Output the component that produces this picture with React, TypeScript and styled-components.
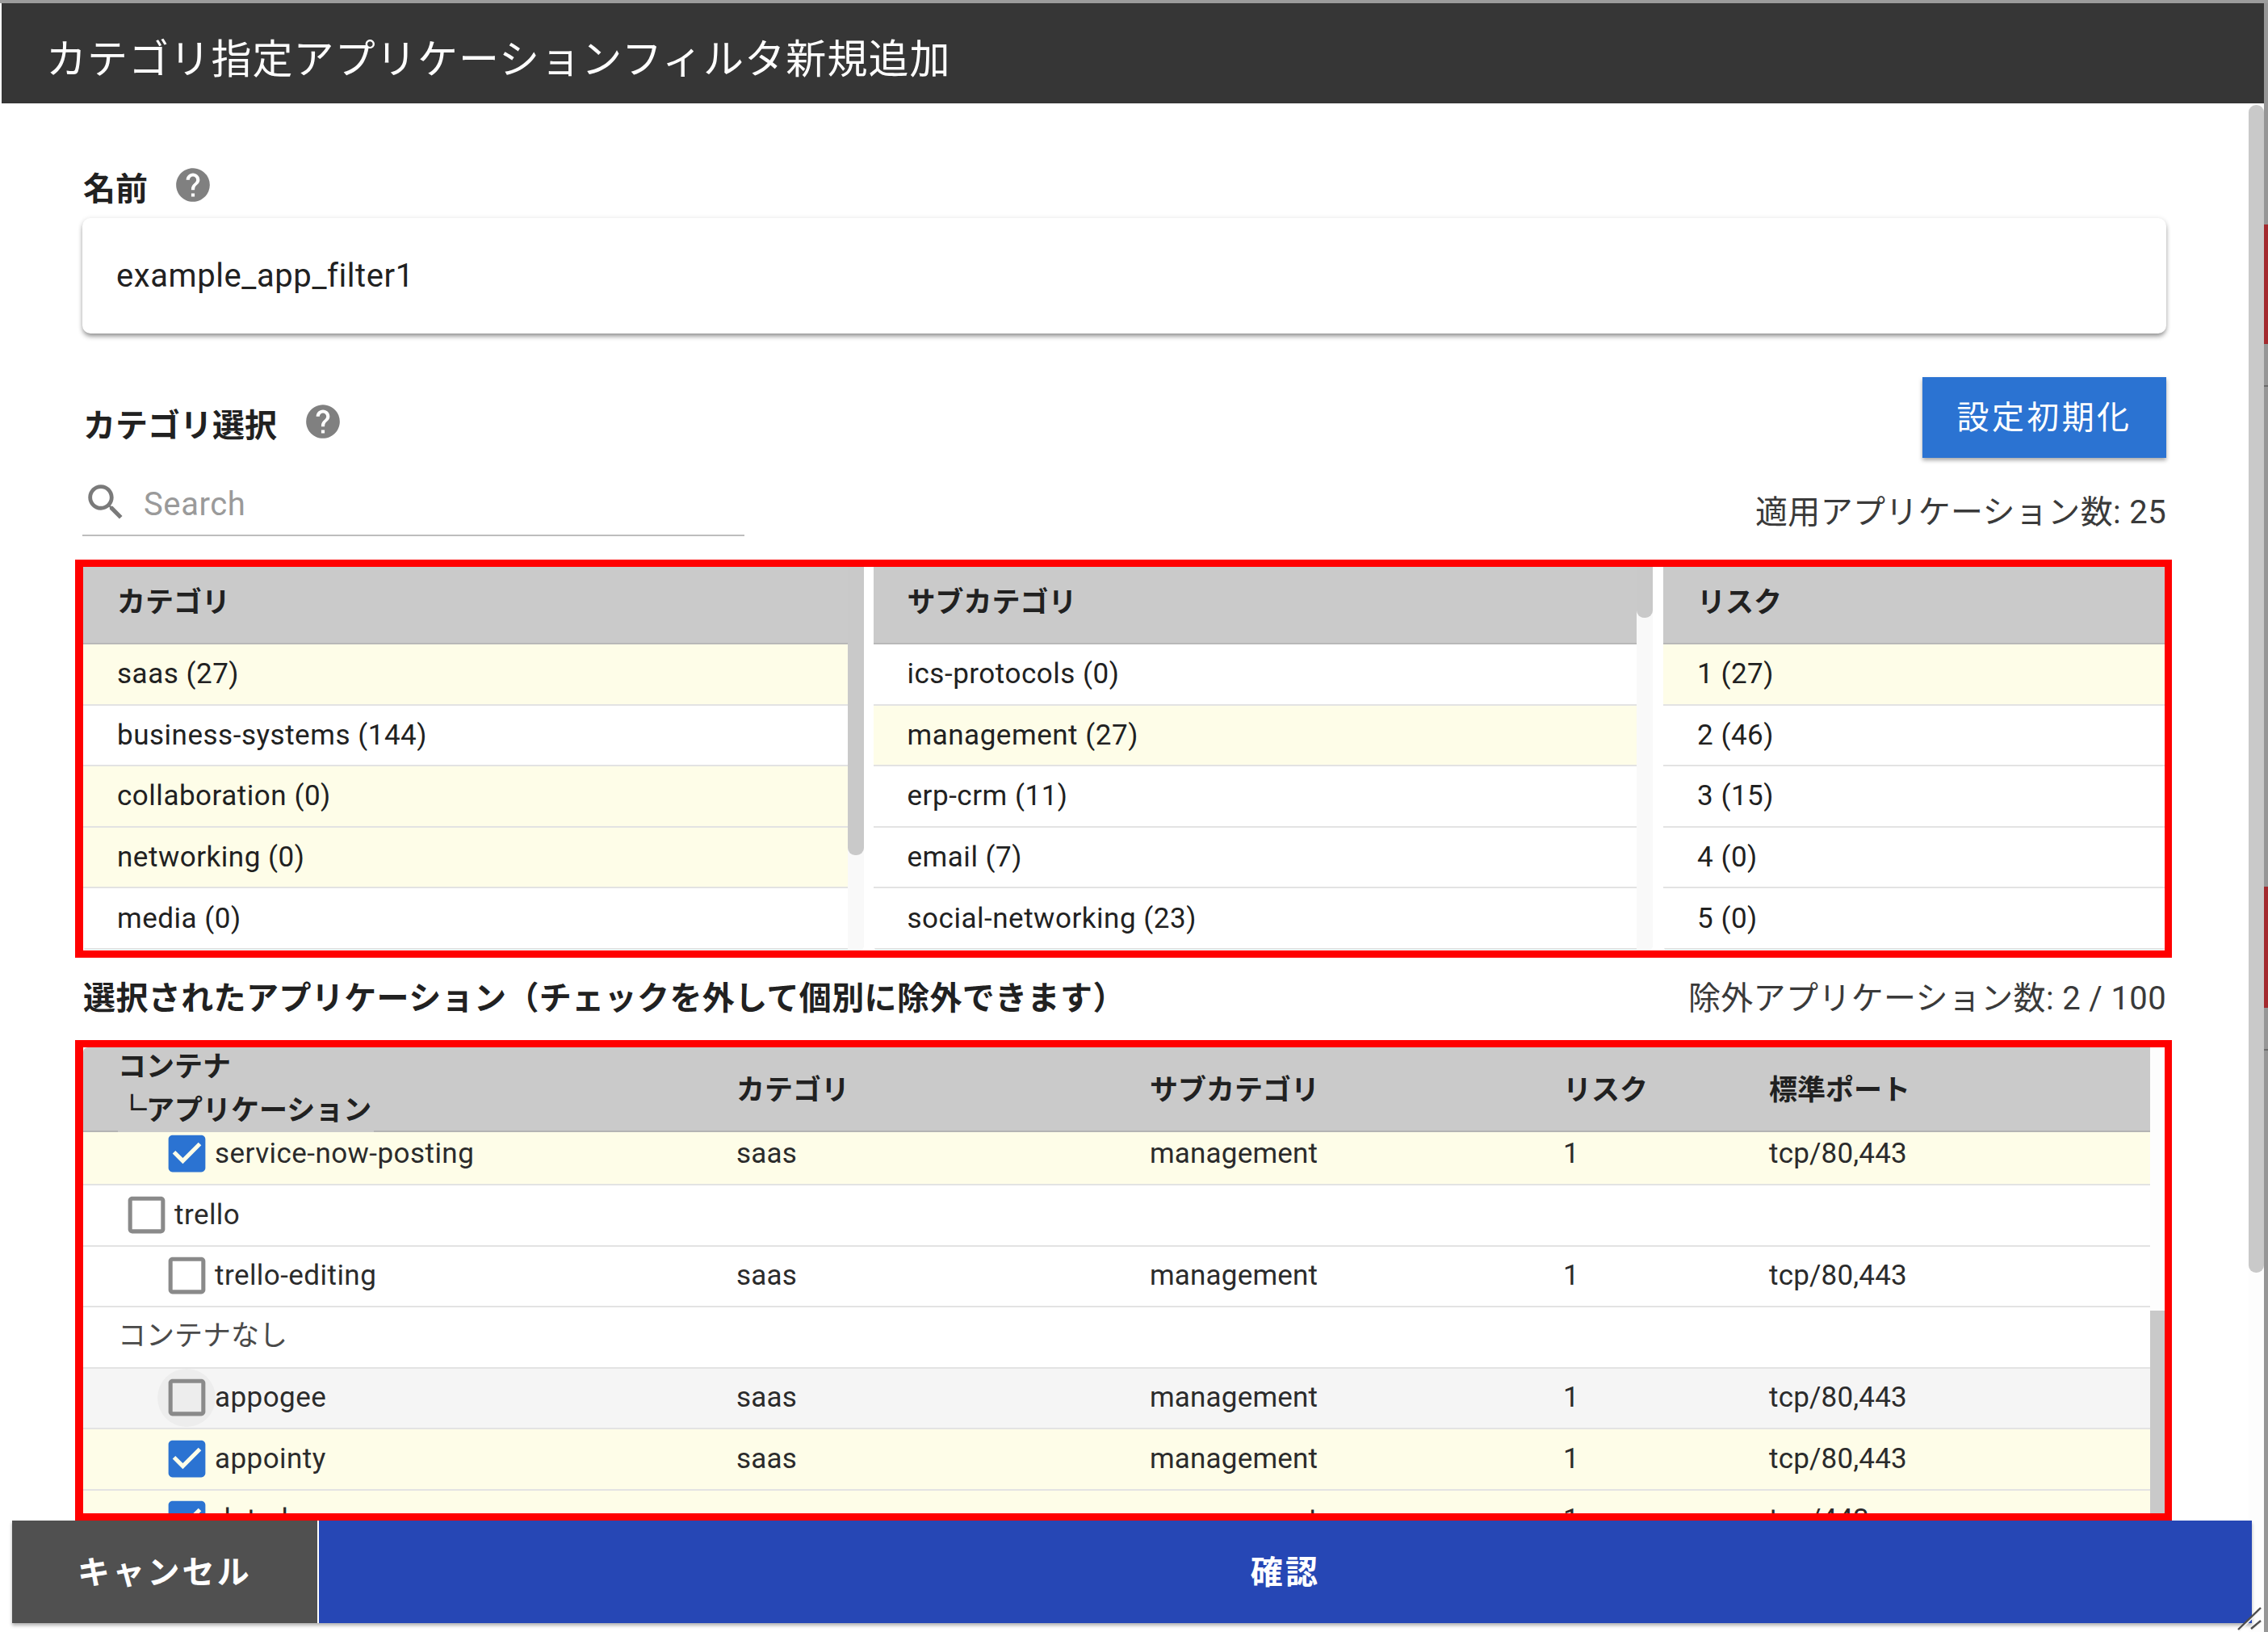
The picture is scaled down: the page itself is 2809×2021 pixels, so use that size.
import React from 'react';
import styled, { createGlobalStyle } from 'styled-components';

const GlobalStyle = createGlobalStyle`
  html, body {
    margin: 0;
    width: 2809px;
    height: 2021px;
    overflow: hidden;
    background: #fff;
    color: #212121;
    font-family: Roboto, "Noto Sans CJK JP", sans-serif;
  }
  * { box-sizing: border-box; }
`;

const HELP_PATH =
  'M12 2C6.48 2 2 6.48 2 12s4.48 10 10 10 10-4.48 10-10S17.52 2 12 2zm1 17h-2v-2h2v2zm2.07-7.75l-.9.92C13.45 12.9 13 13.5 13 15h-2v-.5c0-1.1.45-2.1 1.17-2.83l1.24-1.26c.37-.36.59-.86.59-1.41 0-1.1-.9-2-2-2s-2 .9-2 2H8c0-2.21 1.79-4 4-4s4 1.79 4 4c0 .88-.36 1.68-.93 2.25z';
const SEARCH_PATH =
  'M15.5 14h-.79l-.28-.27C15.41 12.59 16 11.11 16 9.5 16 5.91 13.09 3 9.5 3S3 5.91 3 9.5 5.91 16 9.5 16c1.61 0 3.09-.59 4.23-1.57l.27.28v.79l5 4.99L20.49 19l-4.99-5zm-6 0C7.01 14 5 11.99 5 9.5S7.01 5 9.5 5 14 7.01 14 9.5 11.99 14 9.5 14z';
const CHECKED_PATH =
  'M19 3H5c-1.11 0-2 .9-2 2v14c0 1.1.89 2 2 2h14c1.11 0 2-.9 2-2V5c0-1.1-.89-2-2-2zm-9 14l-5-5 1.41-1.41L10 14.17l7.59-7.59L19 8l-9 9z';
const UNCHECKED_PATH =
  'M19 5v14H5V5h14m0-2H5c-1.1 0-2 .9-2 2v14c0 1.1.9 2 2 2h14c1.1 0 2-.9 2-2V5c0-1.1-.9-2-2-2z';

const Window = styled.div`
  display: flex;
  width: 2809px;
  height: 2021px;
  border-top: 4px solid #9c9c9c;
  overflow: hidden;
`;

const Dialog = styled.div`
  flex: 1;
  min-width: 0;
  display: flex;
  flex-direction: column;
  padding-left: 2px;
`;

/* edge of the window behind the dialog, with the red bits showing through */
const EdgeStrip = styled.div`
  width: 5px;
  margin-top: -4px;
  background: linear-gradient(
    to bottom,
    #969696 0 278px,
    #a32a2e 278px 426px,
    #969696 426px 477px,
    #6c6c6c 477px 479px,
    #969696 479px 1098px,
    #a32a2e 1098px 1248px,
    #969696 1248px 1299px,
    #6c6c6c 1299px 1301px,
    #969696 1301px
  );
`;

const TitleBar = styled.header`
  height: 124px;
  flex: none;
  display: flex;
  align-items: center;
  padding: 5px 0 0 55px;
  background: #363636;
  color: #fff;
  font-size: 50px;
  letter-spacing: 1.1px;
`;

const Main = styled.div`
  flex: 1;
  min-height: 0;
  display: flex;
`;

const Column = styled.div`
  width: 2787px;
  flex: none;
  display: flex;
  flex-direction: column;
`;

const Content = styled.div`
  flex: 1;
  min-height: 0;
  overflow: hidden;
  padding: 76px 106px 0 100px;
`;

const PageScroll = styled.div`
  width: 19px;
  flex: none;
  margin-left: -4px;
  margin-top: 2px;
  background: #fdfdfd;
  position: relative;
`;

const PageThumb = styled.div`
  height: 1446px;
  background: #c9c9c9;
  border-radius: 9px;
`;

const ResizeGrip = styled.svg`
  position: absolute;
  right: -1px;
  bottom: 0;
  width: 34px;
  height: 32px;
  z-index: 2;
`;

const LabelRow = styled.div<{ $gap: number }>`
  display: flex;
  align-items: center;
  gap: ${(p) => p.$gap}px;
  height: 50px;
  padding-left: 1px;
`;

const Label = styled.div`
  font-size: 40px;
  font-weight: 700;
  padding-top: 3px;
`;

const HelpIcon = styled.svg`
  width: 50px;
  height: 50px;
  fill: #808080;
  flex: none;
`;

const NameCard = styled.div`
  height: 143px;
  margin-top: 16px;
  display: flex;
  align-items: center;
  padding-left: 42px;
  border-radius: 10px;
  font-size: 40px;
  letter-spacing: 0.58px;
  background: #fff;
  box-shadow: 0 4px 6px -1px rgba(0, 0, 0, 0.45), 0 0 6px rgba(0, 0, 0, 0.08);
`;

const SectionRow = styled.div`
  margin-top: 54px;
  display: flex;
  justify-content: space-between;
`;

const SectionLeft = styled.div`
  padding-top: 30px;
`;

const ResetButton = styled.button`
  width: 302px;
  height: 100px;
  border: 0;
  padding: 0 0 6px;
  background: #2b73d2;
  color: #fff;
  font: inherit;
  font-size: 40px;
  letter-spacing: 3.4px;
  box-shadow: 0 3px 5px rgba(0, 0, 0, 0.35);
`;

const SearchRow = styled.div`
  display: flex;
  justify-content: space-between;
`;

const SearchBox = styled.div`
  width: 820px;
  height: 97px;
  padding-top: 26px;
  display: flex;
  align-items: flex-start;
  gap: 18px;
  border-bottom: 2px solid #bdbdbd;
`;

const SearchIcon = styled.svg`
  width: 58px;
  height: 58px;
  flex: none;
  fill: #7a7a7a;
`;

const SearchHint = styled.span`
  font-size: 40px;
  line-height: 50px;
  margin-top: 7px;
  letter-spacing: 0.6px;
  color: #9a9a9a;
`;

const CountText = styled.div`
  font-size: 40px;
  letter-spacing: 0.35px;
  color: #3a3a3a;
`;

const AppliedCount = styled(CountText)`
  margin-top: 35px;
`;

const RedFrame = styled.div<{ $top: number; $height: number }>`
  margin: ${(p) => p.$top}px -7px 0 -9px;
  height: ${(p) => p.$height}px;
  border: 9px solid #ff0000;
  border-left-width: 10px;
  overflow: hidden;
  display: flex;
`;

const Pane = styled.div<{ $width: number; $gap: number }>`
  width: ${(p) => p.$width}px;
  flex: none;
  display: flex;
  margin-right: ${(p) => p.$gap}px;
  border-radius: 0 0 6px 6px;
  overflow: hidden;
`;

const PaneList = styled.div`
  flex: 1;
  min-width: 0;
`;

const PaneHead = styled.div`
  height: 96px;
  display: flex;
  align-items: center;
  padding: 0 0 14px 42px;
  background: #cacaca;
  border-bottom: 2px solid #b8b8b8;
  font-size: 35px;
  font-weight: 700;
`;

const PaneRow = styled.div<{ $picked?: boolean }>`
  height: 75.6px;
  display: flex;
  align-items: center;
  padding-left: 42px;
  font-size: 35px;
  letter-spacing: 0.52px;
  background: ${(p) => (p.$picked ? '#fefde8' : '#fff')};
  border-bottom: 2px solid #e3e3e3;
`;

const Track = styled.div<{ $width: number; $bg: string }>`
  width: ${(p) => p.$width}px;
  flex: none;
  background: ${(p) => p.$bg};
`;

const Thumb = styled.div<{ $top: number; $height: number }>`
  margin-top: ${(p) => p.$top}px;
  height: ${(p) => p.$height}px;
  background: #c9c9c9;
  border-radius: 0 0 9px 9px;
`;

const MidRow = styled.div`
  height: 102px;
  display: flex;
  align-items: center;
  justify-content: space-between;
  padding: 0 0 8px 1px;
`;

const MidLabel = styled.div`
  font-size: 40px;
  font-weight: 700;
  letter-spacing: 0.4px;
`;

const TableWrap = styled.div`
  width: 2560px;
  flex: none;
  display: flex;
  flex-direction: column;
  overflow: hidden;
  border-radius: 6px 0 0 0;
`;

const columns = '809px 512px 512px 255px 1fr';

const TableHead = styled.div`
  height: 105px;
  flex: none;
  display: grid;
  grid-template-columns: ${columns};
  grid-template-rows: 98px;
  align-items: center;
  padding-bottom: 5px;
  background: #cacaca;
  border-bottom: 2px solid #b4b4b4;
  font-size: 35px;
  font-weight: 700;
  position: relative;
  z-index: 1;
`;

const HeadStack = styled.div`
  align-self: start;
  margin: -2px 0 0 43px;
  width: 317px;
  height: 107px;
  line-height: 53px;
  background: #cacaca;
`;

const HeadIndented = styled.div`
  white-space: nowrap;
  margin-top: -3px;
`;

const Elbow = styled.span`
  font-family: "Noto Sans CJK JP", sans-serif;
  -webkit-text-stroke: 1.4px #212121;
`;

const TableBody = styled.div`
  flex: 1;
  min-height: 0;
  overflow: hidden;
`;

const Scrolled = styled.div`
  margin-top: -9.6px;
`;

type Tone = 'plain' | 'picked' | 'hover';
const toneColors: Record<Tone, string> = { plain: '#fff', picked: '#fefde8', hover: '#f5f5f5' };

const Row = styled.div<{ $tone: Tone }>`
  height: 75.6px;
  display: grid;
  grid-template-columns: ${columns};
  align-items: center;
  padding-bottom: 4px;
  font-size: 35px;
  letter-spacing: 0.18px;
  color: #2b2b2b;
  background: ${(p) => toneColors[p.$tone]};
  border-bottom: 2px solid #e3e3e3;
`;

const NameCell = styled.div<{ $indent: number }>`
  display: flex;
  align-items: center;
  padding-left: ${(p) => p.$indent}px;
  letter-spacing: 0.45px;
`;

const BoxWrap = styled.span<{ $hover?: boolean }>`
  width: 72px;
  height: 72px;
  flex: none;
  display: flex;
  align-items: center;
  justify-content: center;
  margin-right: -1px;
  border-radius: 50%;
  background: ${(p) => (p.$hover ? '#ededed' : 'transparent')};
`;

const BoxIcon = styled.svg<{ $on: boolean }>`
  width: 61px;
  height: 61px;
  fill: ${(p) => (p.$on ? '#2b73d2' : '#8a8a8a')};
`;

const Muted = styled.span`
  color: #4a4a4a;
  margin-bottom: 6px;
  letter-spacing: 0;
`;

const Footer = styled.div`
  height: 127px;
  flex: none;
  display: flex;
  gap: 2px;
  margin: 0 0 11px 13px;
  box-shadow: 0 3px 4px rgba(0, 0, 0, 0.3);
  position: relative;
  z-index: 1;
`;

const FooterButton = styled.button<{ $bg: string; $width?: number }>`
  ${(p) => (p.$width ? `width: ${p.$width}px; flex: none;` : 'flex: 1;')}
  border: 0;
  padding: 0 0 6px;
  background: ${(p) => p.$bg};
  color: #fff;
  font: inherit;
  font-size: 40px;
  font-weight: 700;
  letter-spacing: 3.2px;
`;

function Help() {
  return (
    <HelpIcon viewBox="0 0 24 24">
      <path d={HELP_PATH} />
    </HelpIcon>
  );
}

const Checkbox = ({ on, hover }: { on: boolean; hover?: boolean }) => (
  <BoxWrap $hover={hover}>
    <BoxIcon $on={on} viewBox="0 0 24 24">
      <path d={on ? CHECKED_PATH : UNCHECKED_PATH} />
    </BoxIcon>
  </BoxWrap>
);

const categories = [
  { text: 'saas (27)', picked: true },
  { text: 'business-systems (144)' },
  { text: 'collaboration (0)', picked: true },
  { text: 'networking (0)', picked: true },
  { text: 'media (0)' },
];
const subCategories = [
  { text: 'ics-protocols (0)' },
  { text: 'management (27)', picked: true },
  { text: 'erp-crm (11)' },
  { text: 'email (7)' },
  { text: 'social-networking (23)' },
];
const risks = [
  { text: '1 (27)', picked: true },
  { text: '2 (46)' },
  { text: '3 (15)' },
  { text: '4 (0)' },
  { text: '5 (0)' },
];

type PaneItem = { text: string; picked?: boolean };

const ListPane = ({
  title,
  items,
  width,
  gap,
  thumb,
}: {
  title: string;
  items: PaneItem[];
  width: number;
  gap: number;
  thumb?: number;
}) => (
  <Pane $width={width} $gap={gap}>
    <PaneList>
      <PaneHead>{title}</PaneHead>
      {items.map((item) => (
        <PaneRow key={item.text} $picked={item.picked}>
          {item.text}
        </PaneRow>
      ))}
    </PaneList>
    {thumb ? (
      <Track $width={20} $bg="#f9f9f9">
        <Thumb $top={0} $height={thumb} />
      </Track>
    ) : null}
  </Pane>
);

const appRows = [
  { name: 'service-now-posting', indent: 105, on: true, tone: 'picked' as Tone, data: true },
  { name: 'trello', indent: 55, on: false, tone: 'plain' as Tone },
  { name: 'trello-editing', indent: 105, on: false, tone: 'plain' as Tone, data: true },
  { name: 'appogee', indent: 105, on: false, tone: 'hover' as Tone, data: true, hover: true },
  { name: 'appointy', indent: 105, on: true, tone: 'picked' as Tone, data: true },
  { name: 'datadog', indent: 105, on: true, tone: 'picked' as Tone, data: true, port: 'tcp/443' },
];

type AppRowData = (typeof appRows)[number];

function AppRow({ row }: { row: AppRowData }) {
  return (
    <Row $tone={row.tone}>
      <NameCell $indent={row.indent - 13}>
        <Checkbox on={row.on} hover={'hover' in row ? row.hover : false} />
        {row.name}
      </NameCell>
      {row.data ? (
        <>
          <div>saas</div>
          <div>management</div>
          <div>1</div>
          <div>{'port' in row && row.port ? row.port : 'tcp/80,443'}</div>
        </>
      ) : null}
    </Row>
  );
}

export default function App() {
  return (
    <>
      <GlobalStyle />
      <Window>
        <Dialog>
          <TitleBar>カテゴリ指定アプリケーションフィルタ新規追加</TitleBar>
          <Main>
            <Column>
              <Content>
                <LabelRow $gap={31}>
                  <Label>名前</Label>
                  <Help />
                </LabelRow>
                <NameCard>example_app_filter1</NameCard>
                <SectionRow>
                  <SectionLeft>
                    <LabelRow $gap={32}>
                      <Label>カテゴリ選択</Label>
                      <Help />
                    </LabelRow>
                  </SectionLeft>
                  <ResetButton>設定初期化</ResetButton>
                </SectionRow>
                <SearchRow>
                  <SearchBox>
                    <SearchIcon viewBox="0 0 24 24">
                      <path d={SEARCH_PATH} />
                    </SearchIcon>
                    <SearchHint>Search</SearchHint>
                  </SearchBox>
                  <AppliedCount>適用アプリケーション数: 25</AppliedCount>
                </SearchRow>
                <RedFrame $top={29} $height={493}>
                  <ListPane title="カテゴリ" items={categories} width={967} gap={11.5} thumb={357} />
                  <ListPane title="サブカテゴリ" items={subCategories} width={965} gap={13.5} thumb={63} />
                  <ListPane title="リスク" items={risks} width={621.5} gap={0} />
                </RedFrame>
                <MidRow>
                  <MidLabel>選択されたアプリケーション（チェックを外して個別に除外できます）</MidLabel>
                  <CountText>除外アプリケーション数: 2 / 100</CountText>
                </MidRow>
                <RedFrame $top={0} $height={595}>
                  <TableWrap>
                    <TableHead>
                      <HeadStack>
                        <div>コンテナ</div>
                        <HeadIndented>
                          <Elbow>└</Elbow>アプリケーション
                        </HeadIndented>
                      </HeadStack>
                      <div>カテゴリ</div>
                      <div>サブカテゴリ</div>
                      <div>リスク</div>
                      <div>標準ポート</div>
                    </TableHead>
                    <TableBody>
                      <Scrolled>
                        {appRows.slice(0, 3).map((r) => (
                          <AppRow key={r.name} row={r} />
                        ))}
                        <Row $tone="plain">
                          <NameCell $indent={43}>
                            <Muted>コンテナなし</Muted>
                          </NameCell>
                        </Row>
                        {appRows.slice(3).map((r) => (
                          <AppRow key={r.name} row={r} />
                        ))}
                      </Scrolled>
                    </TableBody>
                  </TableWrap>
                  <Track $width={18} $bg="#fdfdfd">
                    <Thumb $top={326} $height={260} />
                  </Track>
                </RedFrame>
              </Content>
              <Footer>
                <FooterButton $bg="#505050" $width={378}>
                  キャンセル
                </FooterButton>
                <FooterButton $bg="#2647b5">確認</FooterButton>
              </Footer>
            </Column>
            <PageScroll>
              <PageThumb />
              <ResizeGrip viewBox="0 0 34 32">
                <path d="M2 31 L30 3 M18 30 L30 19" stroke="#f4f4f4" strokeWidth="2" fill="none" />
                <path d="M1 29 L29 2 M17 28 L29 18" stroke="#4e4e4e" strokeWidth="2.4" fill="none" />
              </ResizeGrip>
            </PageScroll>
          </Main>
        </Dialog>
        <EdgeStrip />
      </Window>
    </>
  );
}
